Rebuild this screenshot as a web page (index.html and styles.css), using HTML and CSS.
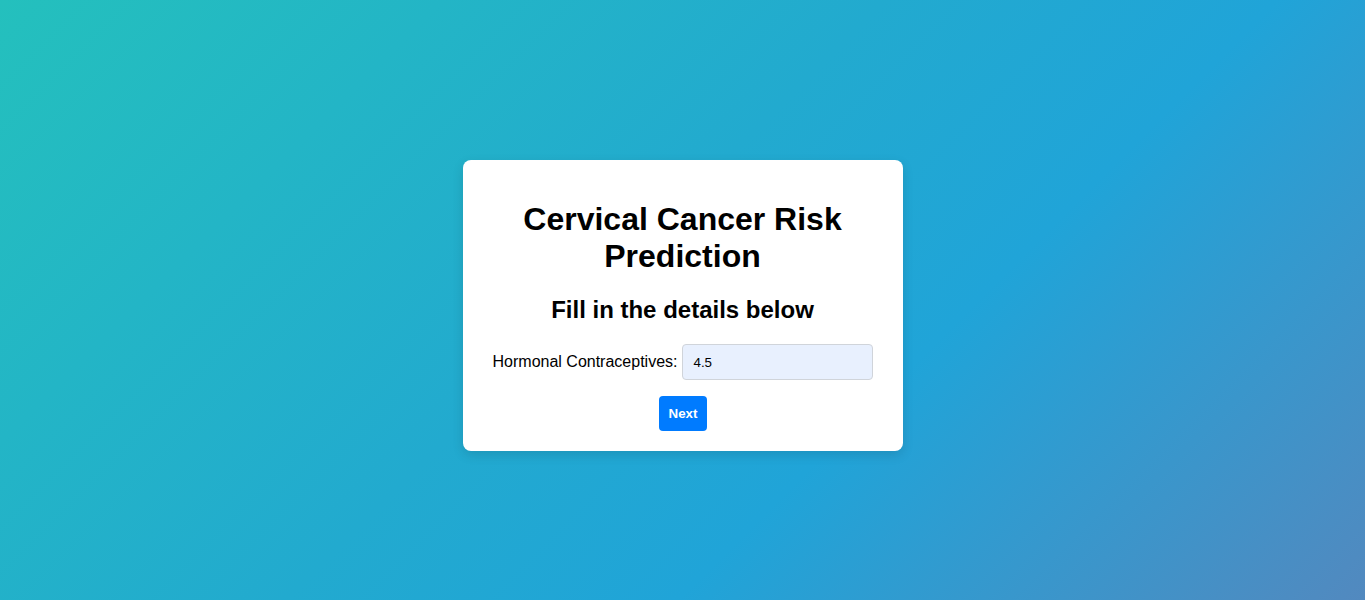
FILE: index.html
```html
<!DOCTYPE html>
<html>
<head>
<meta charset="utf-8">
<title>Cervical Cancer Risk Prediction</title>
<link rel="stylesheet" href="styles.css">
</head>
<body>
<div class="card">
  <h1 class="title">Cervical Cancer Risk Prediction</h1>
  <h2 class="subtitle">Fill in the details below</h2>
  <form class="form">
    <div class="row">
      <label class="label" for="hc">Hormonal Contraceptives:</label>
      <input class="input" id="hc" type="text" value="4.5">
    </div>
    <button class="btn" type="button">Next</button>
  </form>
</div>
</body>
</html>
```
FILE: styles.css
```css
html, body {
  margin: 0;
  padding: 0;
}
body {
  min-height: 100vh;
  font-family: "Liberation Sans", Arial, sans-serif;
  background: linear-gradient(135deg, #24c0bd 0%, #22aacf 45%, #20a4d8 65%, #5289bf 100%);
  display: flex;
  align-items: center;
  justify-content: center;
  box-sizing: border-box;
  padding-top: 11px;
}
.card {
  width: 400px;
  padding: 20px;
  background: #fff;
  border-radius: 8px;
  box-shadow: 0 4px 12px rgba(0,0,0,0.12);
  text-align: center;
}
.title {
  font-size: 32px;
  font-weight: bold;
  margin: 21.44px 0;
  color: #000;
}
.subtitle {
  font-size: 24px;
  font-weight: bold;
  margin: 19.92px 0;
  color: #000;
}
.form {
  margin: 0;
  display: flex;
  flex-direction: column;
  align-items: center;
}
.row {
  display: flex;
  align-items: center;
  justify-content: center;
  gap: 5px;
  margin-bottom: 16px;
  padding-left: 1px;
}
.label {
  font-size: 16px;
  color: #000;
}
.input {
  width: 191px;
  height: 36px;
  box-sizing: border-box;
  padding: 0 10px;
  border: 1px solid #d0d4da;
  border-radius: 4px;
  background: #e8f0fe;
  font-family: "Liberation Sans", Arial, sans-serif;
  font-size: 13.33px;
  color: #000;
  outline: none;
}
.btn {
  background: #007bff;
  color: #fff;
  border: none;
  border-radius: 4px;
  padding: 10px;
  height: 35px;
  margin-left: 1px;
  font-family: "Liberation Sans", Arial, sans-serif;
  font-size: 13.33px;
  font-weight: bold;
  cursor: pointer;
}
```
